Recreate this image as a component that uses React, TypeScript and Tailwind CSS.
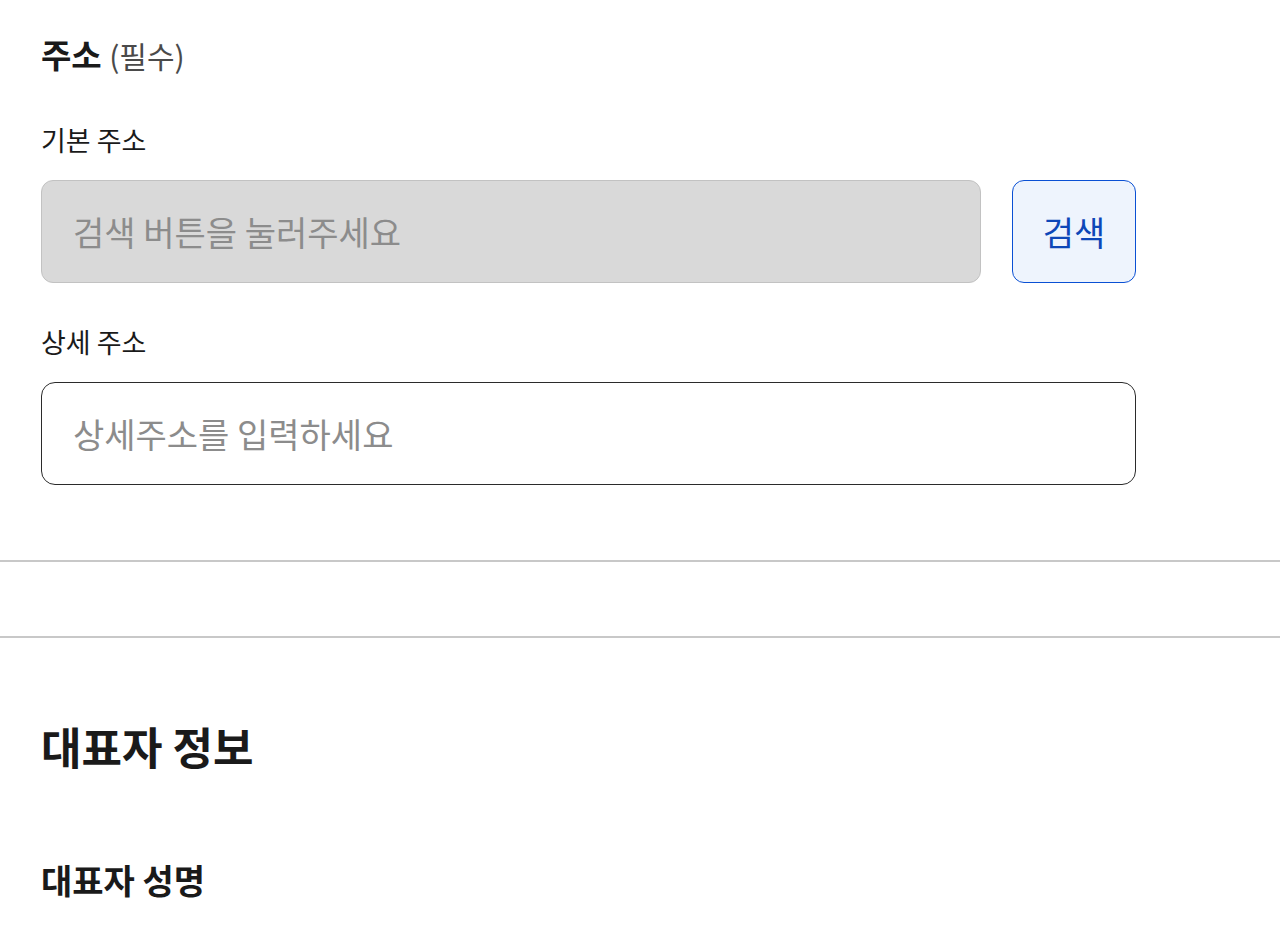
import React, { useState } from 'react';

const font = { fontFamily: '"Noto Sans CJK KR", "Noto Sans", sans-serif' };

const App: React.FC = () => {
  const [detail, setDetail] = useState('');

  return (
    <div className="min-h-screen bg-white text-[#1a1a1a]" style={font}>
      <section className="pl-[41px] pr-[144px] pt-[34px]">
        <h2 className="h-[40px] text-[33px] leading-[40px] font-bold">
          주소 <span className="text-[30px] font-normal text-[#4a4a4a]">(필수)</span>
        </h2>

        <label className="block mt-[50px] text-[27px] leading-[32px]">기본 주소</label>
        <div className="mt-[24px] flex gap-[31px]">
          <input
            type="text"
            disabled
            placeholder="검색 버튼을 눌러주세요"
            className="flex-1 h-[103px] rounded-[12px] border border-[#c2c2c2] bg-[#d9d9d9] px-[31px] text-[34px] placeholder:text-[#8c8c8c] outline-none"
          />
          <button
            type="button"
            className="w-[124px] h-[103px] rounded-[12px] border-[1.5px] border-[#0a50d4] bg-[#eef4fd] text-[34px] text-[#0d47b8]"
          >
            검색
          </button>
        </div>

        <label className="block mt-[43px] text-[27px] leading-[32px]">상세 주소</label>
        <input
          type="text"
          value={detail}
          onChange={e => setDetail(e.target.value)}
          placeholder="상세주소를 입력하세요"
          className="mt-[24px] block w-full h-[103px] rounded-[14px] border-[1.5px] border-[#2b2b2b] bg-white px-[31px] text-[34px] placeholder:text-[#8c8c8c] outline-none"
        />
      </section>

      <div className="mt-[75px] h-[2px] bg-[#c8c8c8]" />
      <div className="mt-[74px] h-[2px] bg-[#c8c8c8]" />

      <section className="pl-[41px] pr-[144px]">
        <h2 className="mt-[80px] text-[44px] leading-[56px] font-bold">대표자 정보</h2>
        <h3 className="mt-[86px] text-[34px] leading-[40px] font-bold">대표자 성명</h3>
      </section>
    </div>
  );
};

export default App;
